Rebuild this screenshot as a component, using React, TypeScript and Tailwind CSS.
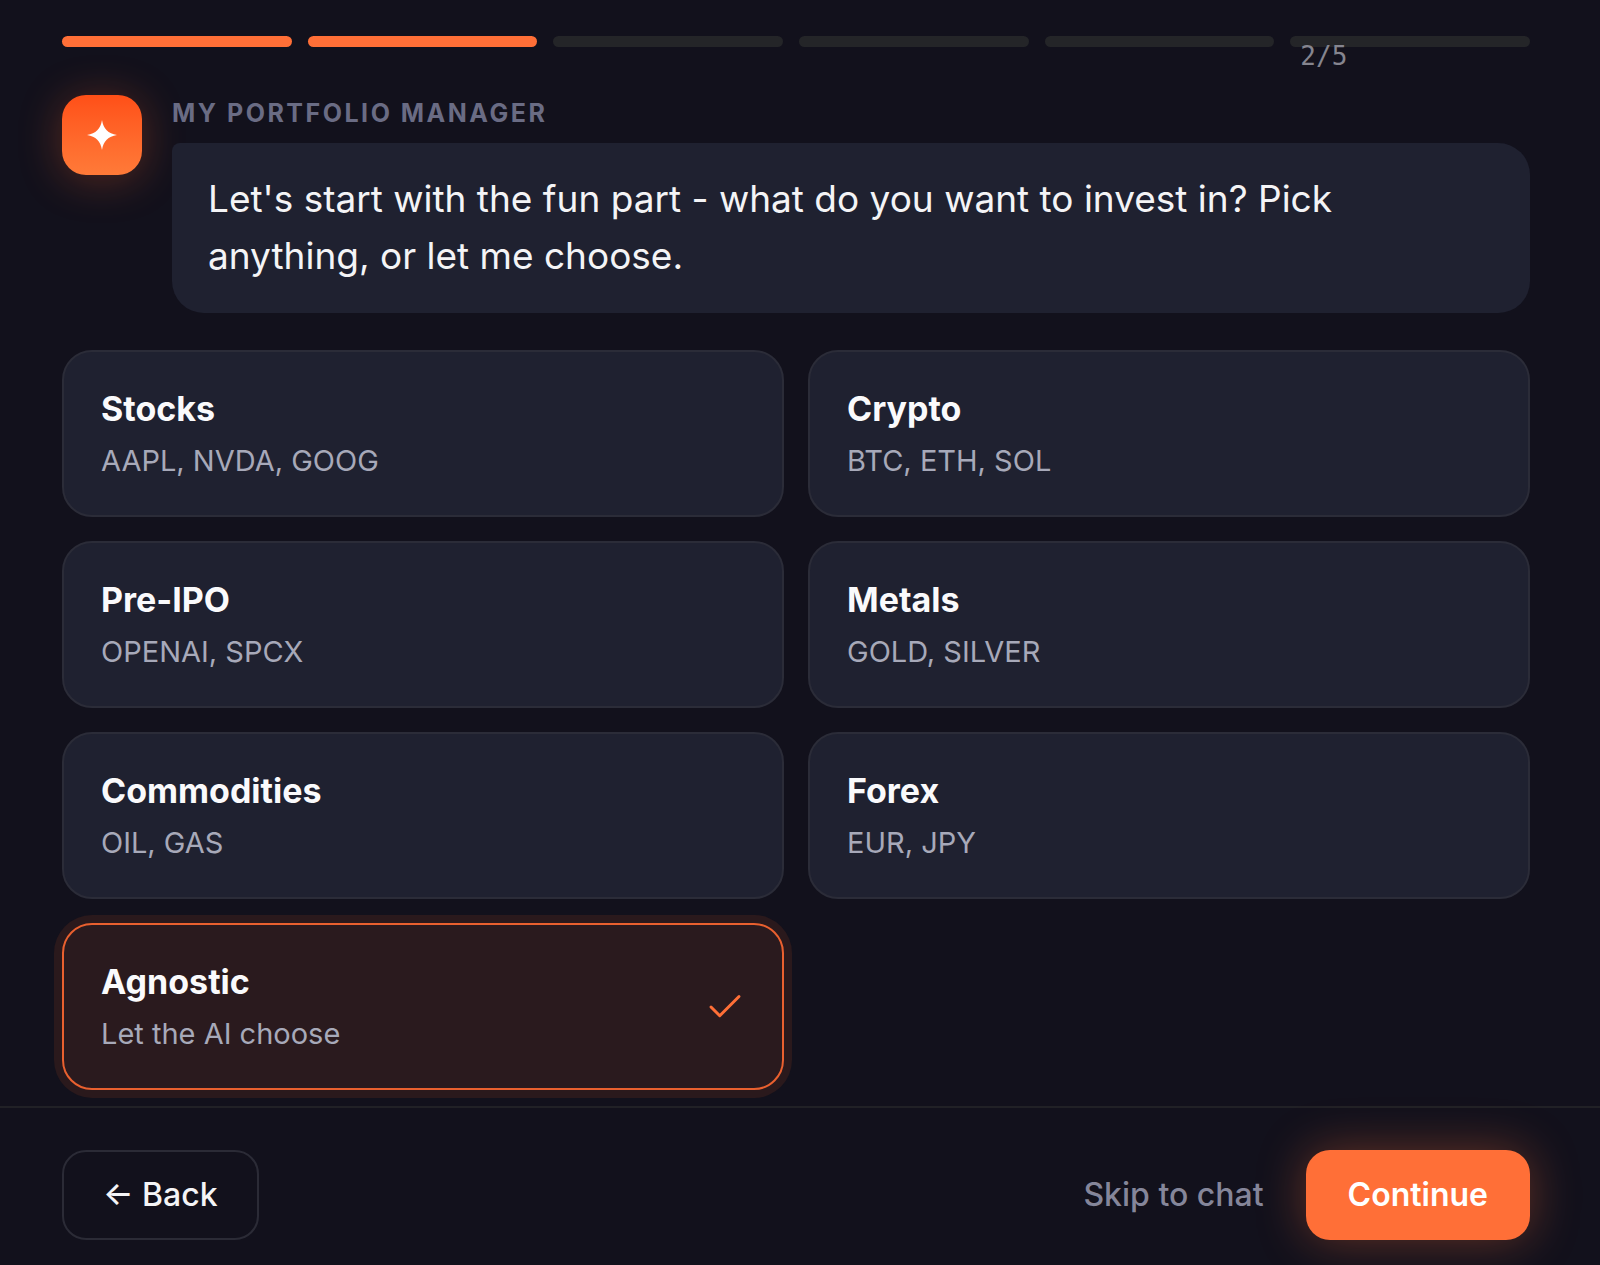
import { useState } from 'react';
import { Check } from 'lucide-react';

interface AssetClass {
  id: string;
  title: string;
  examples: string;
}

const TOTAL_STEPS = 6;

const ASSET_CLASSES: AssetClass[] = [
  { id: 'stocks', title: 'Stocks', examples: 'AAPL, NVDA, GOOG' },
  { id: 'crypto', title: 'Crypto', examples: 'BTC, ETH, SOL' },
  { id: 'pre-ipo', title: 'Pre-IPO', examples: 'OPENAI, SPCX' },
  { id: 'metals', title: 'Metals', examples: 'GOLD, SILVER' },
  { id: 'commodities', title: 'Commodities', examples: 'OIL, GAS' },
  { id: 'forex', title: 'Forex', examples: 'EUR, JPY' },
  { id: 'agnostic', title: 'Agnostic', examples: 'Let the AI choose' },
];

function StepProgress({ current }: { current: number }) {
  return (
    <div className="flex gap-4">
      {Array.from({ length: TOTAL_STEPS }, (_, i) => {
        const isLast = i === TOTAL_STEPS - 1;
        return (
          <div
            key={i}
            className={`relative h-[11px] flex-1 rounded-full ${i < current ? 'bg-[#ff6f37]' : 'bg-[#242528]'} ${isLast ? 'pl-2.5' : ''}`}
          >
            {/* Counter hangs under the last segment */}
            {isLast && (
              <span className="absolute top-1 left-2.5 font-['DejaVu_Sans_Mono',monospace] text-[26px] leading-8 text-[#85858f]">
                {current}/5
              </span>
            )}
          </div>
        );
      })}
    </div>
  );
}

function Avatar() {
  return (
    <div className="flex size-20 shrink-0 items-center justify-center rounded-3xl bg-linear-to-b from-[#ff4f17] to-[#ff7a38] shadow-[0_4px_44px_rgba(255,100,40,0.3)]">
      <svg viewBox="0 0 30 30" className="size-[30px]" fill="#fff" aria-hidden="true">
        <path d="M15 0C16.5 9 21 13.500 30 15C21 16.500 16.500 21 15 30C13.500 21 9 16.500 0 15C9 13.500 13.500 9 15 0Z" />
      </svg>
    </div>
  );
}

interface AssetCardProps {
  asset: AssetClass;
  selected: boolean;
  onToggle: (id: string) => void;
}

function AssetCard({ asset, selected, onToggle }: AssetCardProps) {
  return (
    <button
      type="button"
      aria-pressed={selected}
      onClick={() => onToggle(asset.id)}
      className={`flex items-center justify-between rounded-[30px] border-2 pt-[33px] pr-9 pb-8 pl-[37px] text-left ${
        selected ? 'border-[#e9602f] bg-[#2a1a1e] ring-8 ring-[#2a191c]' : 'border-[#2b2c38] bg-[#1f2130]'
      }`}
    >
      <span className="flex flex-col gap-1.5">
        <span className="text-[34px] leading-[48px] font-bold text-[#fafafc]">{asset.title}</span>
        <span className="text-[29px] leading-[44px] text-[#a7a9b9]">{asset.examples}</span>
      </span>
      {selected && <Check size={42} strokeWidth={1.7} className="shrink-0 text-[#ff6f37]" />}
    </button>
  );
}

export default function App() {
  const [selectedIds, setSelectedIds] = useState<string[]>(['agnostic']);

  const handleToggle = (id: string) => {
    setSelectedIds((prev) => (prev.includes(id) ? prev.filter((x) => x !== id) : [...prev, id]));
  };

  return (
    <div className="flex min-h-screen flex-col bg-[#12111c] font-['Inter',sans-serif] text-[#f4f4f6]">
      <main className="flex-1 pt-9 pr-[70px] pb-4 pl-[62px]">
        <StepProgress current={2} />

        <section className="mt-12 flex gap-[30px]">
          <Avatar />
          <div className="flex-1">
            <h1 className="text-[25px] leading-9 font-bold tracking-widest text-[#6a6c84] uppercase">
              My Portfolio Manager
            </h1>
            <p className="mt-3 rounded-[32px] rounded-tl-lg bg-[#1f2130] px-9 pt-[27px] pb-[29px] text-[37px] leading-[57px]">
              Let's start with the fun part - what do you want to invest in? Pick anything, or let me choose.
            </p>
          </div>
        </section>

        <div className="mt-[37px] grid grid-cols-2 gap-6">
          {ASSET_CLASSES.map((asset) => (
            <AssetCard
              key={asset.id}
              asset={asset}
              selected={selectedIds.includes(asset.id)}
              onToggle={handleToggle}
            />
          ))}
        </div>
      </main>

      <footer className="flex items-center justify-between border-t-2 border-[#212126] pt-[42px] pr-[70px] pb-[25px] pl-[62px]">
        <button
          type="button"
          className="h-[90px] rounded-3xl border-2 border-[#2b2b36] px-[39px] text-[32px] font-medium"
        >
          ← Back
        </button>
        <div className="flex items-center gap-[42px]">
          <button type="button" className="text-[32px] font-medium text-[#85869a]">
            Skip to chat
          </button>
          <button
            type="button"
            className="h-[90px] rounded-3xl bg-[#ff6f37] px-[42px] text-[32px] font-semibold text-white shadow-[0_0_48px_rgba(255,111,55,0.35)]"
          >
            Continue
          </button>
        </div>
      </footer>
    </div>
  );
}
